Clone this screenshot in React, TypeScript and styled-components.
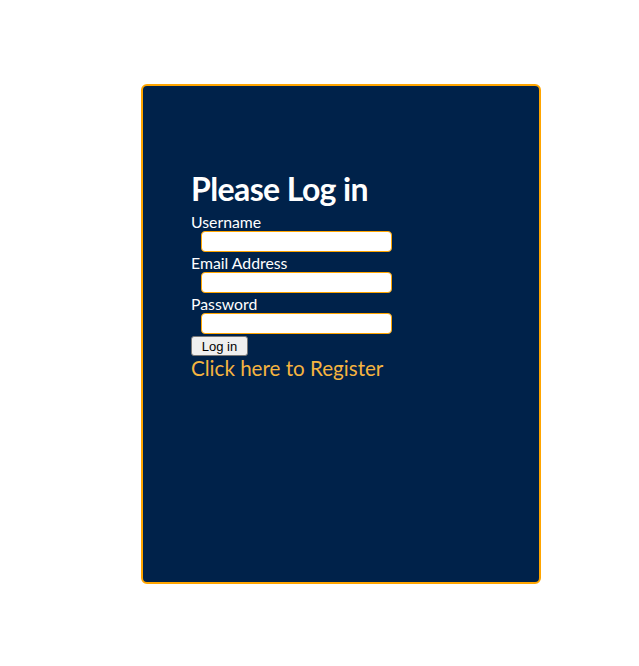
import React from "react";
import styled, { createGlobalStyle } from "styled-components";

const Global = createGlobalStyle`
  html, body { margin: 0; padding: 0; background: #ffffff; }
  body { font-family: Lato, "Open Sans", sans-serif; }
`;

const Page = styled.div`
  padding: 84px 0 0 141px;
`;

const Card = styled.div`
  box-sizing: border-box;
  width: 400px;
  height: 500px;
  background: #00224a;
  border: 2px solid #ffa500;
  border-radius: 6px;
  padding: 84px 0 0 48px;
  color: #ffffff;
`;

const Heading = styled.h1`
  margin: 0 0 6px 0;
  font-size: 32px;
  font-weight: 700;
  line-height: 37px;
  letter-spacing: -0.6px;
`;

const Form = styled.form`
  display: flex;
  flex-direction: column;
  align-items: flex-start;
`;

const Label = styled.label`
  font-size: 15.8px;
  line-height: 18px;
  display: block;
`;

const Input = styled.input`
  box-sizing: border-box;
  display: block;
  width: 191px;
  height: 21px;
  margin: 0 0 2px 10px;
  border: 1px solid #ffa500;
  border-radius: 4px;
  background: #ffffff;
  padding: 0 4px;
`;

const Button = styled.button`
  box-sizing: border-box;
  height: 20px;
  width: 57px;
  padding: 0;
  font-family: "Liberation Sans", Arial, sans-serif;
  font-size: 13px;
  color: #000;
  background: #efefef;
  border: 1px solid #767676;
  border-radius: 3px;
`;

const RegisterLink = styled.a`
  font-size: 20.6px;
  line-height: 24px;
  color: #f5b440;
  text-decoration: none;
`;

export default function App() {
  return (
    <>
      <Global />
      <Page>
        <Card>
          <Heading>Please Log in</Heading>
          <Form onSubmit={(e) => e.preventDefault()}>
            <Label htmlFor="u">Username</Label>
            <Input id="u" type="text" />
            <Label htmlFor="e">Email Address</Label>
            <Input id="e" type="email" />
            <Label htmlFor="p">Password</Label>
            <Input id="p" type="password" />
            <Button type="submit">Log in</Button>
            <RegisterLink href="#">Click here to Register</RegisterLink>
          </Form>
        </Card>
      </Page>
    </>
  );
}
